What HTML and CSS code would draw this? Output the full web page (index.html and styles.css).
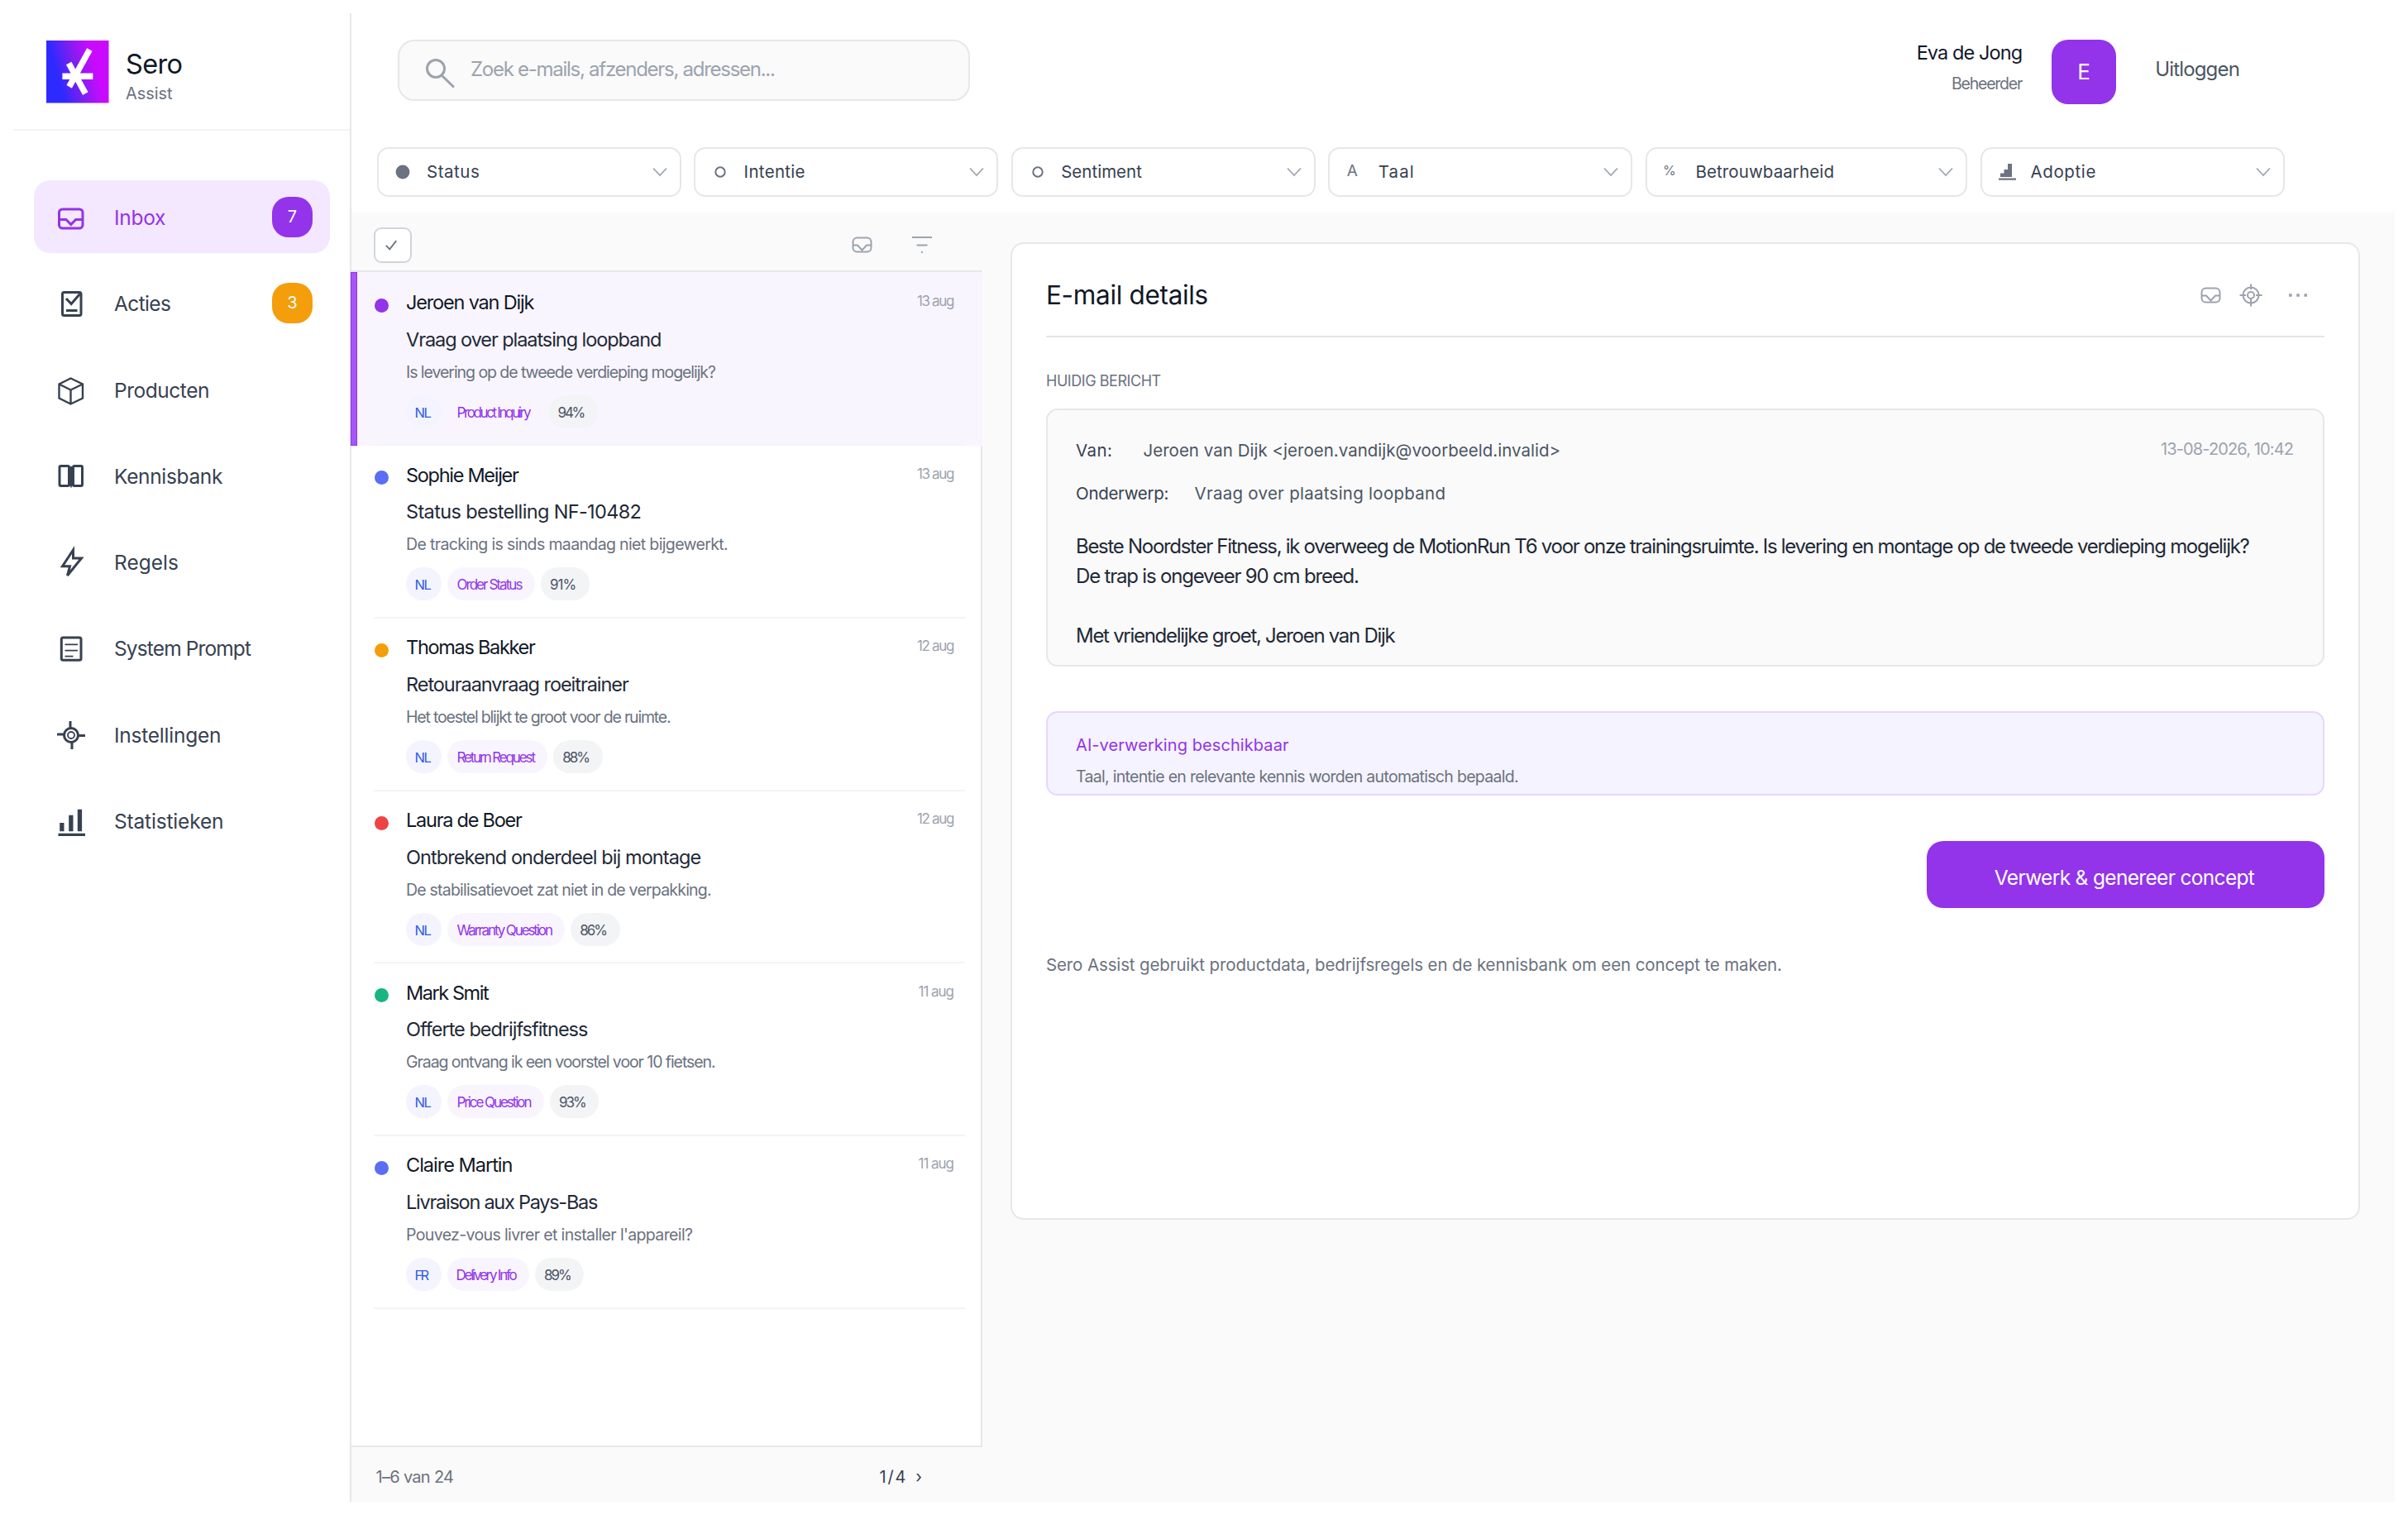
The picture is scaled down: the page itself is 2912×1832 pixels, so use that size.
FILE: index.html
```html
<!DOCTYPE html>
<html lang="nl">
<head>
  <meta charset="UTF-8" />
  <title>Sero Assist - Inbox</title>
  <link rel="stylesheet" href="styles.css">
</head>
<body>
  <div class="app">
    <aside class="sidebar">
      <div class="brand">
        <svg class="logo" viewBox="0 0 75 75">
          <defs>
            <linearGradient id="logoGradient" x1="0" y1="0.64" x2="1" y2="0.36">
              <stop offset="0.18" stop-color="#2c2aff" />
              <stop offset="0.5" stop-color="#841df0" />
              <stop offset="0.78" stop-color="#ca0aff" />
            </linearGradient>
          </defs>
          <rect width="75" height="75" fill="url(#logoGradient)" />
          <path d="M19.3 43H56M52 11L27.5 55.5M27 27.3L47 63.7" fill="none" stroke="#fff" stroke-width="7.3" />
        </svg>
        <div class="brand-text">
          <div class="brand-name" data-w="66.5">Sero</div>
          <div class="brand-sub" data-w="57.1">Assist</div>
        </div>
      </div>

      <nav class="nav">
        <a class="nav-item active">
          <svg class="nav-icon" viewBox="0 0 36 36"><rect x="3.5" y="8" width="28.5" height="23" rx="4" /><path d="M3.5 20.5H12l5.8 6 5.8-6H32" /></svg>
          <span data-w="60">Inbox</span>
          <b class="badge">7</b>
        </a>
        <a class="nav-item">
          <svg class="nav-icon" viewBox="0 0 36 36"><rect x="7.5" y="4.5" width="22.5" height="28" rx="2" /><path d="M12 12l6.2 6.5L28.5 6.5M12 26.5h13.5" /></svg>
          <span data-w="68">Acties</span>
          <b class="badge badge-orange">3</b>
        </a>
        <a class="nav-item">
          <svg class="nav-icon thin" viewBox="0 0 36 36"><path d="M17.5 4.5L32 11.5V28.5L17.5 35.5 3.5 28.5V11.5zM3.5 11.5l14 7 14.5-7M17.5 18.5v17" /></svg>
          <span data-w="112">Producten</span>
        </a>
        <a class="nav-item">
          <svg class="nav-icon" viewBox="0 0 36 36"><rect x="4" y="6.5" width="11.5" height="24" rx="1.5" /><rect x="20.5" y="6.5" width="11" height="24" rx="1.5" /><path class="fill" d="M14.5 7h7v24h-2.5l-1 2.5-1-2.5h-2.5z" /></svg>
          <span data-w="130">Kennisbank</span>
        </a>
        <a class="nav-item">
          <svg class="nav-icon" viewBox="0 0 36 36"><path d="M20.5 3L7.5 22.8H16.5L13.5 34 30.5 13H20.5z" /></svg>
          <span data-w="75">Regels</span>
        </a>
        <a class="nav-item">
          <svg class="nav-icon" viewBox="0 0 36 36"><rect x="6.3" y="5" width="23.7" height="27.3" rx="2" /><path class="hair" d="M10.5 13.3h15.5M10.5 20.6h15.5M10.5 27.6h10" /></svg>
          <span data-w="165">System Prompt</span>
        </a>
        <a class="nav-item">
          <svg class="nav-icon" viewBox="0 0 36 36"><circle cx="18" cy="19" r="8.5" /><circle class="hair" cx="18" cy="19" r="4" /><path d="M1 18h8.5M26.5 19.5H35M17 2V10.5M19 27.5v8.5" /></svg>
          <span data-w="126">Instellingen</span>
        </a>
        <a class="nav-item">
          <svg class="nav-icon" viewBox="0 0 36 36"><path class="fill" d="M4.2 20h5.3v10.3H4.2zM15.2 10.7h5.3v19.6h-5.3zM25.8 3.7h5.3v26.6h-5.3zM2.5 32.7H35v3.3H2.5z" /></svg>
          <span data-w="130">Statistieken</span>
        </a>
      </nav>
    </aside>

    <main class="main">
      <header class="topbar">
        <div class="search">
          <svg class="search-icon" viewBox="0 0 38 38"><circle cx="13" cy="13" r="10.5" /><path d="M20.5 21.5L35 35.5" /></svg>
          <span data-w="367">Zoek e-mails, afzenders, adressen...</span>
        </div>
        <div class="account">
          <div class="user">
            <div class="user-name" data-w="125">Eva de Jong</div>
            <div class="user-role" data-w="85">Beheerder</div>
          </div>
          <div class="avatar">E</div>
          <a class="logout" data-w="99.5">Uitloggen</a>
        </div>
      </header>

      <div class="filters">
        <div class="filter">
          <svg class="filter-icon" viewBox="0 0 24 24"><circle class="fill" cx="12" cy="12" r="8.4" /></svg>
          <span data-w="62">Status</span>
          <svg class="chevron" viewBox="0 0 18 12"><path d="M1 1.5l8 8.5 8-8.5" /></svg>
        </div>
        <div class="filter">
          <svg class="filter-icon" viewBox="0 0 24 24"><circle cx="13" cy="12" r="5.7" /></svg>
          <span data-w="72">Intentie</span>
          <svg class="chevron" viewBox="0 0 18 12"><path d="M1 1.5l8 8.5 8-8.5" /></svg>
        </div>
        <div class="filter">
          <svg class="filter-icon" viewBox="0 0 24 24"><circle cx="13" cy="12" r="5.7" /></svg>
          <span data-w="97">Sentiment</span>
          <svg class="chevron" viewBox="0 0 18 12"><path d="M1 1.5l8 8.5 8-8.5" /></svg>
        </div>
        <div class="filter">
          <i class="filter-icon filter-letter">A</i>
          <span data-w="42">Taal</span>
          <svg class="chevron" viewBox="0 0 18 12"><path d="M1 1.5l8 8.5 8-8.5" /></svg>
        </div>
        <div class="filter filter-wide">
          <i class="filter-icon filter-letter filter-pct">%</i>
          <span data-w="165">Betrouwbaarheid</span>
          <svg class="chevron" viewBox="0 0 18 12"><path d="M1 1.5l8 8.5 8-8.5" /></svg>
        </div>
        <div class="filter">
          <svg class="filter-icon" viewBox="0 0 24 24"><path class="fill" d="M5 13.5h4.5V9H14V2h5v16H5zM3 19.5h21v2.3H3z" /></svg>
          <span data-w="78">Adoptie</span>
          <svg class="chevron" viewBox="0 0 18 12"><path d="M1 1.5l8 8.5 8-8.5" /></svg>
        </div>
      </div>

      <div class="content">
        <section class="list-panel">
          <div class="list-toolbar">
            <div class="check"><svg viewBox="0 0 18 16"><path d="M2 8.5l5 5L16 2" /></svg></div>
            <svg class="tool-inbox" viewBox="0 0 26 20"><rect x="1.5" y="1.5" width="22" height="17" rx="5" /><path d="M1.5 10.5H7l5.5 6 5.5-6h5.5" /></svg>
            <svg class="tool-filter" viewBox="0 0 26 22"><path d="M1 2h24M6.5 11.5h13M12 20h2" /></svg>
          </div>
          <ul class="mails" id="mails"></ul>
          <div class="list-footer">
            <span data-w="93.6">1–6 van 24</span>
            <span class="pager"><span data-w="31">1/4</span><span>›</span></span>
          </div>
        </section>

        <section class="detail">
          <div class="detail-head">
            <h2 data-w="193.6">E-mail details</h2>
            <div class="detail-icons">
              <svg class="d-inbox" viewBox="0 0 26 20"><rect x="1.5" y="1.5" width="22" height="17" rx="5" /><path d="M1.5 10.5H7l5.5 6 5.5-6h5.5" /></svg>
              <svg class="d-target" viewBox="0 0 28 28"><circle cx="14" cy="14" r="9.5" /><circle cx="14" cy="14" r="4" /><path d="M0.5 14H8M20 14h7.5M14 0.5V7M14 18v9.5" /></svg>
              <svg class="d-more" viewBox="0 0 24 6"><path class="fill" d="M1 1.2h3.6v3.6H1zM10.2 1.2h3.6v3.6h-3.6zM19.4 1.2H23v3.6h-3.6z" /></svg>
            </div>
          </div>

          <div class="section-label" data-w="137.6">HUIDIG BERICHT</div>
          <article class="message">
            <div class="field">
              <span class="field-label" data-w="43">Van:</span>
              <span class="field-value" data-w="502">Jeroen van Dijk &lt;jeroen.vandijk@voorbeeld.invalid&gt;</span>
              <span class="field-date" data-w="159.6">13-08-2026, 10:42</span>
            </div>
            <div class="field field-subject">
              <span class="field-label" data-w="110.5">Onderwerp:</span>
              <span class="field-value" data-w="302">Vraag over plaatsing loopband</span>
            </div>
            <div class="message-body">
              <p data-w="1417.5">Beste Noordster Fitness, ik overweeg de MotionRun T6 voor onze trainingsruimte. Is levering en montage op de tweede verdieping mogelijk?</p>
              <p data-w="340">De trap is ongeveer 90 cm breed.</p>
              <p class="signoff" data-w="384.5">Met vriendelijke groet, Jeroen van Dijk</p>
            </div>
          </article>

          <div class="ai-box">
            <div class="ai-title" data-w="258">AI-verwerking beschikbaar</div>
            <div class="ai-text" data-w="535">Taal, intentie en relevante kennis worden automatisch bepaald.</div>
          </div>

          <button class="generate"><span data-w="315">Verwerk &amp; genereer concept</span></button>
          <div class="footnote" data-w="888">Sero Assist gebruikt productdata, bedrijfsregels en de kennisbank om een concept te maken.</div>
        </section>
      </div>
    </main>
  </div>

  <script src="app.js"></script>
</body>
</html>
```
FILE: styles.css
```css
* {
  box-sizing: border-box;
}

body {
  margin: 0;
  padding: 16px;
  background: #fff;
  color: #374151;
  font-family: Inter, "Liberation Sans", sans-serif;
}

svg {
  fill: none;
  stroke: currentColor;
  overflow: visible;
  flex: none;
}

svg .fill {
  fill: currentColor;
  stroke: none;
}

[data-w] {
  white-space: nowrap;
}

.app {
  display: grid;
  grid-template-columns: 409px 1fr;
  width: 2880px;
  height: 1800px;
}

/* sidebar */
.sidebar {
  border-right: 2px solid #e5e7eb;
}

.brand {
  display: flex;
  gap: 21px;
  height: 142px;
  padding: 32.5px 0 0 39.5px;
  border-bottom: 2px solid #f3f4f6;
}

.logo {
  width: 75.5px;
  height: 75.5px;
  stroke: none;
}

.brand-text {
  padding-top: 9px;
}

.brand-name {
  font-size: 32.5px;
  line-height: 40px;
  color: #111827;
}

.brand-sub {
  margin-top: 3px;
  font-size: 20px;
  line-height: 24px;
  color: #6b7280;
}

.nav {
  display: flex;
  flex-direction: column;
  gap: 16.3px;
  padding: 59.5px 24px 0 25px;
}

.nav-item {
  display: flex;
  align-items: center;
  height: 88px;
  padding: 2px 21px 0 26.5px;
  border-radius: 20px;
  font-size: 24.5px;
  line-height: 32px;
}

.nav-item.active {
  background: #f3e8ff;
  color: #9333ea;
}

.nav-item span {
  padding-top: 1px;
}

.nav-icon {
  width: 36px;
  height: 36px;
  margin-right: 34.5px;
  stroke-width: 3;
}

.nav-icon.thin {
  stroke-width: 2.4;
}

.nav-icon .hair {
  stroke-width: 1.8;
}

.badge {
  width: 49px;
  height: 49px;
  margin-left: auto;
  border-radius: 20px;
  background: #9333ea;
  color: #fff;
  font-size: 20px;
  line-height: 49px;
  font-weight: 400;
  text-align: center;
}

.badge-orange {
  background: #f59e0b;
}

/* top bar */
.main {
  display: flex;
  flex-direction: column;
}

.topbar {
  display: flex;
  justify-content: space-between;
  height: 162px;
  padding: 32px 188px 0 56px;
}

.search {
  display: flex;
  width: 692px;
  height: 74px;
  padding: 18px 0 0 31px;
  border: 2px solid #e5e7eb;
  border-radius: 20px;
  background: #fafafa;
  color: #9ca3af;
  font-size: 24px;
  line-height: 32px;
}

.search-icon {
  width: 38px;
  height: 38px;
  margin: 2px 17px 0 0;
  stroke-width: 3;
}

.account {
  display: flex;
}

.user {
  text-align: right;
}

.user-name {
  font-size: 23.5px;
  line-height: 31px;
  color: #111827;
}

.user-role {
  margin-top: 8px;
  font-size: 19.5px;
  line-height: 28px;
  color: #6b7280;
}

.avatar {
  width: 78px;
  height: 78px;
  margin: 0 47px 0 36px;
  border-radius: 20px;
  background: #9333ea;
  color: #fff;
  font-size: 26px;
  line-height: 78px;
  text-align: center;
}

.logout {
  padding-top: 19.5px;
  font-size: 24px;
  line-height: 32px;
  color: #4b5563;
}

.filters {
  display: flex;
  gap: 15.6px;
  height: 79px;
  padding-left: 30.5px;
}

.filter {
  display: flex;
  align-items: center;
  width: 368px;
  height: 60px;
  padding: 0 15px 0 17px;
  border: 2px solid #e5e7eb;
  border-radius: 14px;
  font-size: 20.5px;
  line-height: 28px;
}

.filter-wide {
  width: 389.5px;
}

.filter-icon {
  width: 24px;
  height: 24px;
  margin-right: 17.5px;
  stroke-width: 2;
  color: #6b7280;
}

.filter-letter {
  padding-right: 4px;
  font-size: 19px;
  line-height: 22px;
  font-style: normal;
  text-align: center;
}

.filter-pct {
  font-size: 16px;
  line-height: 20px;
}

.chevron {
  width: 18px;
  height: 12px;
  margin-left: auto;
  color: #9ca3af;
  stroke-width: 1.7;
}

/* mail list */
.content {
  display: flex;
  flex: 1;
  background: #fafafa;
}

.list-panel {
  display: flex;
  flex-direction: column;
  width: 763px;
}

.list-toolbar {
  display: flex;
  align-items: flex-start;
  height: 72px;
  padding: 18px 60px 0 27px;
  border-bottom: 2px solid #e5e7eb;
}

.check {
  display: flex;
  align-items: center;
  justify-content: center;
  width: 46px;
  height: 43px;
  padding-right: 4px;
  border: 2px solid #d1d5db;
  border-radius: 9px;
  background: #fff;
  color: #6b7280;
}

.check svg {
  width: 16px;
  height: 15px;
  stroke-width: 2;
}

.tool-inbox,
.tool-filter {
  color: #9ca3af;
  stroke-width: 2;
}

.tool-inbox {
  width: 26px;
  height: 20px;
  margin: 11px 46px 0 auto;
}

.tool-filter {
  width: 26px;
  height: 22px;
  margin-top: 10px;
}

.mails {
  flex: 1;
  margin: 0;
  padding: 1.5px 0 0;
  border-right: 2px solid #e5e7eb;
  background: #fff;
  list-style: none;
}

.mail {
  position: relative;
  padding: 0 19.5px 0 26.5px;
}

.mail.active {
  margin: -1.5px -2px 0 0;
  padding: 1.5px 21.5px 0 26.5px;
  background: #f9f5ff;
}

/* selection bar over the left edge of the row */
.mail.active::before {
  content: "";
  box-sizing: border-box;
  position: absolute;
  top: 0;
  bottom: 0;
  left: -1px;
  width: 8px;
  border: 1px solid #9333ea;
  background: #a855f7;
}

.mail-inner {
  display: grid;
  grid-template-columns: 38px 1fr auto;
  grid-template-rows: 32px 32px 28px 40px;
  height: 208.7px;
  padding: 19.5px 13.5px 0 1.5px;
  border-bottom: 2px solid #f3f4f6;
}

.mail-dot {
  width: 17px;
  height: 17px;
  margin-top: 10.5px;
  border-radius: 50%;
}

.mail-name {
  font-size: 23.5px;
  line-height: 32px;
  color: #111827;
}

.mail-date {
  font-size: 17px;
  line-height: 29px;
  color: #9ca3af;
}

.mail-subject,
.mail-preview,
.chips {
  grid-column: 2 / 4;
}

.mail-subject {
  margin-top: 12.7px;
  font-size: 23.5px;
  line-height: 32px;
  color: #1f2937;
}

.mail-preview {
  margin-top: 21.7px;
  font-size: 19.5px;
  line-height: 28px;
  color: #6b7280;
}

.chips {
  display: flex;
  gap: 7px;
  margin: 35.5px 0 0 -0.5px;
}

.chip {
  height: 40px;
  padding: 1px 16.5px 0 11px;
  border-radius: 20px;
  background: #f3f4f6;
  color: #4b5563;
  font-size: 17px;
  line-height: 40px;
}

.chip-lang {
  min-width: 43px;
  padding-right: 14px;
  background: #f4f4ff;
  color: #2f5bea;
  font-size: 16.5px;
}

.chip-intent {
  background: #f9f5ff;
  color: #9333ea;
}

.list-footer {
  display: flex;
  justify-content: space-between;
  height: 68px;
  padding: 21.5px 73px 0 29.5px;
  border-top: 2px solid #e5e7eb;
  font-size: 20px;
  line-height: 28px;
  color: #6b7280;
}

.pager {
  display: flex;
  gap: 10px;
  color: #374151;
}

/* detail card */
.detail {
  width: 1632px;
  height: 1182px;
  margin: 36px 0 0 34px;
  padding: 0 41px;
  border: 2px solid #e5e7eb;
  border-radius: 16px;
  background: #fff;
}

.detail-head {
  display: flex;
  justify-content: space-between;
  height: 112.5px;
  padding-top: 42px;
  border-bottom: 2px solid #e5e7eb;
}

.detail-head h2 {
  margin: 0;
  font-size: 31.5px;
  line-height: 40px;
  font-weight: 400;
  color: #111827;
}

.detail-icons {
  display: flex;
  align-items: center;
  height: 40px;
  padding-right: 20px;
  color: #9ca3af;
  stroke-width: 2;
}

.d-inbox {
  width: 26px;
  height: 20px;
  margin-right: 21px;
}

.d-target {
  width: 28px;
  height: 28px;
  margin-right: 31px;
}

.d-more {
  width: 24px;
  height: 6px;
}

.section-label {
  margin: 41.5px 0 20.5px;
  font-size: 18px;
  line-height: 24px;
  color: #6b7280;
}

.message {
  height: 312px;
  padding: 35px 36px 0 34px;
  border: 2px solid #e5e7eb;
  border-radius: 14px;
  background: #fafafa;
}

.field {
  display: flex;
  font-size: 20.5px;
  line-height: 28px;
  color: #4b5563;
}

.field-label {
  width: 81.5px;
  color: #374151;
}

.field-date {
  margin: -1.5px 0 0 auto;
  font-size: 20px;
  color: #9ca3af;
}

.field-subject {
  margin-top: 24px;
}

.field-subject .field-label {
  width: 143.5px;
}

.message-body {
  margin-top: 32px;
  font-size: 24px;
  line-height: 36px;
  color: #1f2937;
}

.message-body p {
  margin: 0;
}

.message-body .signoff {
  margin-top: 36px;
}

.ai-box {
  height: 102px;
  margin-top: 54px;
  padding: 25px 34px 0;
  border: 2px solid #e9d5ff;
  border-radius: 14px;
  background: #f5f3ff;
  line-height: 28px;
}

.ai-title {
  font-size: 20px;
  color: #9333ea;
}

.ai-text {
  margin-top: 10px;
  font-size: 19.5px;
  color: #6b7280;
}

.generate {
  display: block;
  width: 481px;
  height: 81.5px;
  margin: 55px 0 55.3px auto;
  padding: 7px 3px 0 0;
  border: 0;
  border-radius: 20px;
  background: #9333ea;
  color: #fff;
  font: 24.5px Inter, "Liberation Sans", sans-serif;
}

.footnote {
  font-size: 20.5px;
  line-height: 28px;
  color: #6b7280;
}
```
FILE: app.js
```js
const mails = [
  { name: 'Jeroen van Dijk', nameW: 154.6, date: '13 aug', dateW: 45, subject: 'Vraag over plaatsing loopband', subjectW: 308, preview: 'Is levering op de tweede verdieping mogelijk?', previewW: 373, lang: 'NL', intent: 'Product Inquiry', intentW: 89.5, score: '94%', color: '#9333ea', active: true },
  { name: 'Sophie Meijer', nameW: 136, date: '13 aug', dateW: 45, subject: 'Status bestelling NF-10482', subjectW: 282.6, preview: 'De tracking is sinds maandag niet bijgewerkt.', previewW: 388, lang: 'NL', intent: 'Order Status', intentW: 79, score: '91%', color: '#5b6cf5' },
  { name: 'Thomas Bakker', nameW: 156, date: '12 aug', dateW: 45, subject: 'Retouraanvraag roeitrainer', subjectW: 268, preview: 'Het toestel blijkt te groot voor de ruimte.', previewW: 319, lang: 'NL', intent: 'Return Request', intentW: 95, score: '88%', color: '#f59e0b' },
  { name: 'Laura de Boer', nameW: 139, date: '12 aug', dateW: 45, subject: 'Ontbrekend onderdeel bij montage', subjectW: 355.5, preview: 'De stabilisatievoet zat niet in de verpakking.', previewW: 368, lang: 'NL', intent: 'Warranty Question', intentW: 115.5, score: '86%', color: '#ef4444' },
  { name: 'Mark Smit', nameW: 99, date: '11 aug', dateW: 43, subject: 'Offerte bedrijfsfitness', subjectW: 219, preview: 'Graag ontvang ik een voorstel voor 10 fietsen.', previewW: 373, lang: 'NL', intent: 'Price Question', intentW: 89, score: '93%', color: '#18b583' },
  { name: 'Claire Martin', nameW: 127.5, date: '11 aug', dateW: 43, subject: 'Livraison aux Pays-Bas', subjectW: 230, preview: "Pouvez-vous livrer et installer l'appareil?", previewW: 345, lang: 'FR', intent: 'Delivery Info', intentW: 73, score: '89%', color: '#5b6cf5' }
];

document.getElementById('mails').innerHTML = mails.map(m => `
  <li class="mail${m.active ? ' active' : ''}">
    <div class="mail-inner">
      <i class="mail-dot" style="background:${m.color}"></i>
      <div class="mail-name" data-w="${m.nameW}">${m.name}</div>
      <div class="mail-date" data-w="${m.dateW}">${m.date}</div>
      <div class="mail-subject" data-w="${m.subjectW}">${m.subject}</div>
      <div class="mail-preview" data-w="${m.previewW}">${m.preview}</div>
      <div class="chips">
        <span class="chip chip-lang" data-w="${m.lang === 'FR' ? 17 : 19}">${m.lang}</span>
        <span class="chip chip-intent" data-w="${m.intentW}">${m.intent}</span>
        <span class="chip" data-w="${m.score === '91%' ? 29.5 : 31}">${m.score}</span>
      </div>
    </div>
  </li>`).join('');

// letter-spacing so that each label fills its data-w width
const ctx = document.createElement('canvas').getContext('2d');
document.querySelectorAll('[data-w]').forEach(el => {
  const cs = getComputedStyle(el);
  const text = el.textContent;
  ctx.font = `${cs.fontWeight} ${cs.fontSize} Inter`;
  const m = ctx.measureText(text);
  const ink = m.actualBoundingBoxLeft + m.actualBoundingBoxRight;
  el.style.letterSpacing = ((el.dataset.w - ink) / (text.length - 1)).toFixed(3) + 'px';
});
```
